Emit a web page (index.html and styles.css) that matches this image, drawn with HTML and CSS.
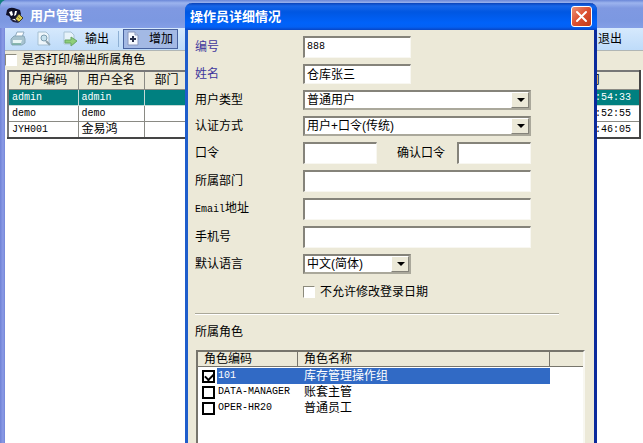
FILE: index.html
```html
<!DOCTYPE html>
<html lang="zh-CN">
<head>
    <meta charset="utf-8">
    <title>用户管理</title>
    <meta name="viewport" content="width=device-width">
    <link rel="stylesheet" href="styles.css">
</head>
<body>
    <div class="window">
        <div class="window-title">
            <svg class="logo" width="18" height="18" viewBox="0 0 18 18">
                <path d="M1 3Q3 0 8 1L14 3L15 7L12 13L5 12L3 9L0 8Z" fill="#101028"/>
                <path d="M3 5L6 4L7 8L5 9ZM9 4L11 4L10 8L8 9Z" fill="#fff"/>
                <path d="M9 12L13 7L17 11L13 15Z" fill="#d8c84c" stroke="#3d3c28"/>
                <path d="M4 12L9 11L13 16L7 15Z" fill="#20203c"/>
                <path d="M6 12L9 12L10 14Z" fill="#fff"/>
                <path d="M12 10L14 12" stroke="#8c8236"/>
            </svg>
            <span>用户管理</span>
        </div>
        <div class="toolbar">
            <button type="button" class="tool" aria-label="打印">
                <svg width="16" height="16" viewBox="0 0 16 16">
                    <path d="M5 6L7 1H14L12 6" fill="#fff" stroke="#8fabc0"/>
                    <path d="M1 8L4 5H14L15 8V12L12 14H2L1 12Z" fill="#a7c3cf" stroke="#8aa9ba"/>
                    <path d="M3 9H12L11 12H3Z" fill="#e8f5f4"/>
                    <path d="M2 13H11" stroke="#69aa8e"/>
                </svg>
            </button>
            <button type="button" class="tool" aria-label="预览">
                <svg width="16" height="16" viewBox="0 0 16 16">
                    <path d="M2 1H10L13 4V14H2Z" fill="#eef6fb" stroke="#a5bfd2"/>
                    <circle cx="8" cy="7" r="3" fill="#c7e2ee" stroke="#7d9cae"/>
                    <path d="M10 10L14 14" stroke="#8d9fa9" stroke-width="2"/>
                </svg>
            </button>
            <button type="button" class="tool">
                <svg width="16" height="16" viewBox="0 0 16 16">
                    <path d="M2 1H9L12 4V13H2Z" fill="#e7f3fa" stroke="#a9c3d5"/>
                    <path d="M3 9H9V6L15 10L9 15V12H3Z" fill="#8fcf78" stroke="#69a767"/>
                </svg>
                <span>输出</span>
            </button>
            <span class="separator"></span>
            <button type="button" class="tool active">
                <svg width="16" height="16" viewBox="0 0 16 16">
                    <path d="M2 1H9L12 4V14H2Z" fill="#f6f9ff" stroke="#8897bd"/>
                    <path d="M9 1V4H12" fill="#c5d2ec" stroke="#8897bd"/>
                    <path d="M7 5V11M4 8H10" stroke="#28304c" stroke-width="2"/>
                </svg>
                <span>增加</span>
            </button>
            <button type="button" class="tool exit">退出</button>
        </div>
        <div class="option">
            <input type="checkbox" class="check" id="with-roles">
            <label for="with-roles">是否打印/输出所属角色</label>
        </div>
        <div class="content">
            <table class="users">
                <thead>
                    <tr>
                        <th class="col-code">用户编码</th>
                        <th class="col-name">用户全名</th>
                        <th class="col-dept">部门</th>
                        <th></th>
                        <th class="col-time">时间</th>
                    </tr>
                </thead>
                <tbody>
                    <tr class="current">
                        <td class="latin">admin</td>
                        <td class="latin">admin</td>
                        <td></td>
                        <td></td>
                        <td class="latin time">:54:33</td>
                    </tr>
                    <tr>
                        <td class="latin">demo</td>
                        <td class="latin">demo</td>
                        <td></td>
                        <td></td>
                        <td class="latin time">:52:55</td>
                    </tr>
                    <tr>
                        <td class="latin">JYH001</td>
                        <td>金易鸿</td>
                        <td></td>
                        <td></td>
                        <td class="latin time">:46:05</td>
                    </tr>
                </tbody>
            </table>
        </div>
    </div>

    <div class="dialog" role="dialog" aria-labelledby="dialog-title">
        <div class="dialog-title">
            <span id="dialog-title">操作员详细情况</span>
            <button type="button" class="close" aria-label="关闭">
                <svg width="19" height="19" viewBox="0 0 19 19">
                    <path d="M5 5L14 14M14 5L5 14" stroke="#fff" stroke-width="2" stroke-linecap="round"/>
                </svg>
            </button>
        </div>
        <form class="dialog-body">
            <div class="fields">
                <label for="code" class="required">编号</label>
                <input type="text" class="text latin narrow" id="code" value="888">

                <label for="name" class="required">姓名</label>
                <input type="text" class="text narrow low" id="name" value="仓库张三">

                <label for="type">用户类型</label>
                <span class="combo">
                    <select id="type"><option>普通用户</option></select>
                </span>

                <label for="auth">认证方式</label>
                <span class="combo">
                    <select id="auth"><option>用户+口令(传统)</option></select>
                </span>

                <label for="password">口令</label>
                <div class="pair">
                    <input type="password" class="text" id="password">
                    <label for="confirm">确认口令</label>
                    <input type="password" class="text" id="confirm">
                </div>

                <label for="dept">所属部门</label>
                <input type="text" class="text" id="dept">

                <label for="email"><span class="latin">Email</span>地址</label>
                <input type="text" class="text" id="email">

                <label for="mobile">手机号</label>
                <input type="text" class="text" id="mobile">

                <label for="language">默认语言</label>
                <span class="combo narrow">
                    <select id="language"><option>中文(简体)</option></select>
                </span>
            </div>
            <div class="lock-date">
                <input type="checkbox" class="check" id="lock-date">
                <label for="lock-date">不允许修改登录日期</label>
            </div>
            <hr>
            <div class="roles-title">所属角色</div>
            <div class="roles-box">
                <table class="roles">
                    <colgroup>
                        <col class="role-tick">
                        <col class="role-code">
                        <col class="role-name">
                        <col>
                    </colgroup>
                    <thead>
                        <tr>
                            <th colspan="2">角色编码</th>
                            <th>角色名称</th>
                            <th class="role-rest"></th>
                        </tr>
                    </thead>
                    <tbody>
                        <tr class="selected">
                            <td class="tick"><input type="checkbox" class="box" id="role-101" checked></td>
                            <td class="latin"><label for="role-101">101</label></td>
                            <td class="name">库存管理操作组</td>
                            <td></td>
                        </tr>
                        <tr>
                            <td class="tick"><input type="checkbox" class="box" id="role-data"></td>
                            <td class="latin"><label for="role-data">DATA-MANAGER</label></td>
                            <td class="name">账套主管</td>
                            <td></td>
                        </tr>
                        <tr>
                            <td class="tick"><input type="checkbox" class="box" id="role-oper"></td>
                            <td class="latin"><label for="role-oper">OPER-HR20</label></td>
                            <td class="name">普通员工</td>
                            <td></td>
                        </tr>
                    </tbody>
                </table>
            </div>
        </form>
    </div>
</body>
</html>
```

FILE: styles.css
```css
* {
    box-sizing: border-box;
}
html,
body {
    height: 100%;
    margin: 0;
    overflow: hidden;
}
body {
    position: relative;
    background: #15807f;
}
body,
button,
input,
select {
    font-family: "Liberation Sans", "Noto Sans CJK SC", sans-serif;
    font-size: 12px;
    line-height: 16px;
    color: #000;
}
table {
    border-collapse: collapse;
    table-layout: fixed;
}
th {
    font-weight: normal;
}
.latin {
    font-family: "Liberation Mono", "Noto Sans CJK SC", monospace;
    font-size: 10px;
}

/* main window */
.window {
    display: flex;
    flex-direction: column;
    height: 100%;
    padding-left: 5px;
    background: linear-gradient(to right, #6f82d6, #8b9be6 3px, #7386d8 5px);
    border-top-left-radius: 7px;
}
.window-title {
    display: flex;
    align-items: center;
    gap: 6px;
    height: 28px;
    margin-left: -5px;
    padding: 3px 0 0 6px;
    background: linear-gradient(#6a87d8, #9cb4ee 3px, #7f99e2 8px, #7c98e1 21px, #849fe6);
    border-top-left-radius: 7px;
    color: #fff;
    font-size: 13px;
    font-weight: bold;
}
.toolbar {
    display: flex;
    align-items: center;
    height: 23px;
    background: linear-gradient(#d6e9fd, #bedbf9);
    border-bottom: 1px solid #b0b6b5;
}
.tool {
    display: flex;
    align-items: center;
    gap: 7px;
    height: 20px;
    padding: 0 5px;
    border: 0;
    background: none;
}
.tool svg {
    flex: none;
}
.separator {
    width: 1px;
    height: 16px;
    margin: 0 4px;
    background: #8eb0d4;
}
.tool.active {
    background: #a3b9e4;
    border: 1px solid #48639f;
    padding: 0 4px 0 2px;
}
.exit {
    margin-left: auto;
    padding-right: 21px;
}
.option {
    display: flex;
    align-items: center;
    gap: 5px;
    height: 19px;
    padding-bottom: 1px;
    background: #ece9d8;
}
.content {
    flex: 1;
    padding: 0 2px;
    background: #fff;
}
.check {
    appearance: none;
    width: 12px;
    height: 12px;
    margin: 0;
    background: #fff;
    border: 1px solid;
    border-color: #8c8a7c #fff #fff #8c8a7c;
}

/* users */
.users {
    width: 100%;
    border: 2px solid #454545;
    border-left-color: #777;
    border-top-color: #777;
}
.users th,
.users td {
    height: 16px;
    padding: 0 3px;
    border: 1px solid #8a8a84;
    line-height: 15px;
    text-align: left;
}
.users th {
    height: 18px;
    padding: 0;
    background: #ece9d8;
    text-align: center;
}
.users .current td {
    background: #008080;
    border-color: #c5d9d5;
    color: #fff;
}
.users .time {
    padding-right: 8px;
    text-align: right;
}
.col-code {
    width: 70px;
}
.col-name {
    width: 66px;
}
.col-dept {
    width: 45px;
}
.col-time {
    width: 104px;
}

/* dialog over the main window */
.dialog {
    position: absolute;
    top: 3px;
    left: 185px;
    bottom: 0;
    width: 412px;
    display: flex;
    flex-direction: column;
    border: solid #0a2a9c;
    border-width: 0 3px;
    border-left-color: #1f5dcb;
    border-radius: 7px 7px 0 0;
    background: #ece9d8;
}
.dialog-title {
    flex: none;
    display: flex;
    align-items: center;
    justify-content: space-between;
    height: 27px;
    margin: 0 -3px;
    padding: 0 5px;
    border-radius: 7px 7px 0 0;
    background: linear-gradient(#0a42b8, #1766e8 3px, #0057e2 9px, #0062fa 20px, #0360f4 24px, #0845c4);
    color: #fff;
    font-size: 13px;
    font-weight: bold;
}
.close {
    display: flex;
    width: 21px;
    height: 21px;
    padding: 0;
    border: 1px solid #fff;
    border-radius: 3px;
    background: linear-gradient(135deg, #ec9276, #dc4f30 50%, #c33b19);
}
.dialog-body {
    flex: 1;
    min-height: 0;
    display: flex;
    flex-direction: column;
    padding: 6px 9px 0 7px;
    overflow: hidden;
}
.fields {
    display: grid;
    grid-template-columns: 108px 228px;
    row-gap: 6px;
    align-items: center;
}
.required {
    color: #40379c;
}
.text {
    width: 100%;
    min-width: 0;
    height: 22px;
    margin: 0;
    padding: 0 2px 2px;
    border: solid;
    border-width: 2px 1px 1px 2px;
    border-color: #85837a #f8f7f1 #f8f7f1 #85837a;
    background: #fff;
}
.narrow {
    width: 108px;
}
.low {
    height: 20px;
}
.pair {
    display: grid;
    grid-template-columns: 74px 1fr 74px;
    align-items: center;
}
.pair label {
    padding-left: 20px;
}
.combo {
    position: relative;
    display: block;
    height: 20px;
}
.combo select {
    appearance: none;
    width: 100%;
    height: 20px;
    margin: 0;
    padding: 0 20px 0 2px;
    border: 2px solid;
    border-color: #85837a #aaa89b #aaa89b #85837a;
    border-radius: 0;
    background: #fff;
}
.combo::before {
    content: "";
    position: absolute;
    top: 2px;
    right: 2px;
    bottom: 2px;
    width: 16px;
    background: #ece9d8;
    border: 1px solid;
    border-color: #fff #85837a #85837a #fff;
    pointer-events: none;
}
.combo::after {
    content: "";
    position: absolute;
    top: 8px;
    right: 6px;
    border: 4px solid transparent;
    border-top-color: #000;
    border-bottom: 0;
    pointer-events: none;
}
.lock-date {
    display: flex;
    align-items: center;
    gap: 5px;
    padding: 10px 0 0 108px;
}
hr {
    width: 364px;
    margin: 13px 0 0;
    border: 0;
    border-top: 1px solid #aaa899;
    border-bottom: 1px solid #fff;
}
.roles-title {
    padding: 9px 0 10px;
}
.roles-box {
    flex: 1;
    margin-left: 1px;
    border: solid;
    border-width: 2px 2px 0;
    border-color: #77756c #f8f7f1 #f8f7f1 #77756c;
    background: #fff;
}
.roles {
    width: 100%;
    border-collapse: separate;
    border-spacing: 0;
}
.roles th {
    height: 15px;
    padding: 0 6px;
    background: #ece9d8;
    border-right: 1px solid #77756c;
    border-bottom: 1px solid #77756c;
    line-height: 14px;
    text-align: left;
}
.roles .role-rest {
    border-right: 0;
}
.role-tick {
    width: 19px;
}
.role-code {
    width: 81px;
}
.role-name {
    width: 252px;
}
.roles td {
    height: 16px;
    padding: 0 1px;
    line-height: 16px;
    white-space: nowrap;
}
.roles tbody::before {
    content: "";
    display: block;
    height: 1px;
}
.roles .tick {
    padding: 1px 0 0 4px;
    line-height: 0;
}
.roles .name {
    padding-left: 6px;
}
.selected .latin,
.selected .name {
    background: #316ac5;
    color: #fff;
}
.box {
    appearance: none;
    display: block;
    width: 13px;
    height: 13px;
    margin: 0;
    border: 2px solid #000;
    background: #fff;
}
.box:checked::before {
    content: "";
    display: block;
    width: 7px;
    height: 4px;
    margin: 1px;
    border: solid #000;
    border-width: 0 0 2px 2px;
    transform: rotate(-45deg);
}
```
